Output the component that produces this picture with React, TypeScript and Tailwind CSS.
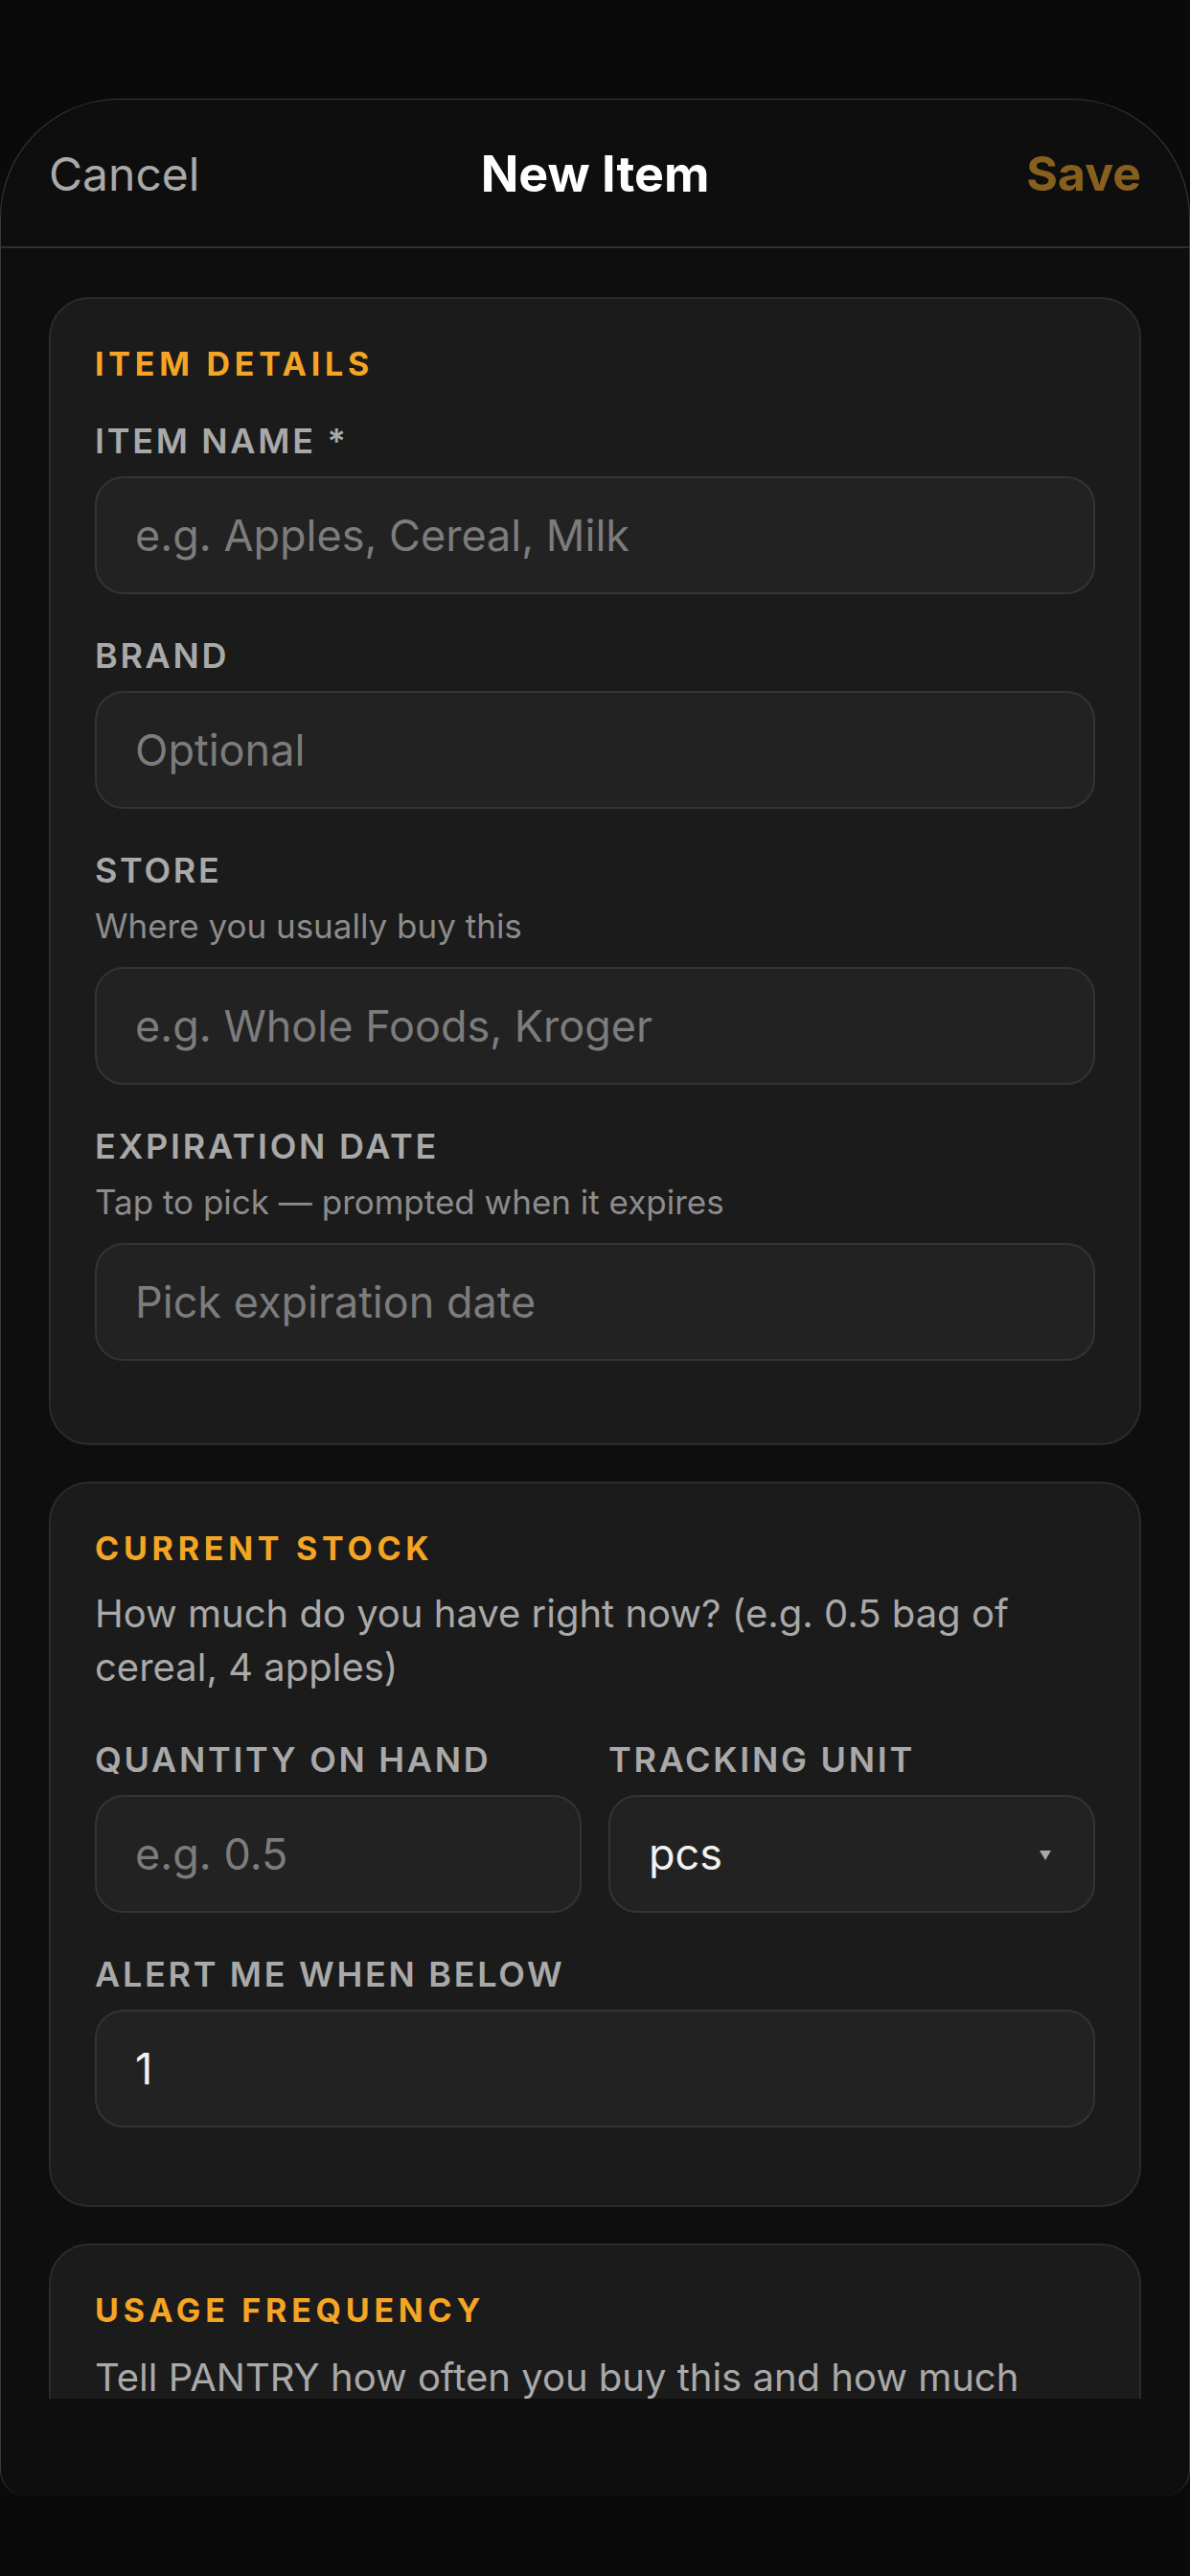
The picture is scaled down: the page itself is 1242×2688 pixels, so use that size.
import React from 'react';

const Label = ({ text, helper }: { text: string; helper?: string }) => (
  <div>
    <div className="text-[36px] leading-[36px] font-semibold tracking-[0.075em] text-[#a9a9a9] mb-[19px]">{text}</div>
    {helper && <div className="text-[35px] leading-[44px] text-[#8c8c8c] -mt-[1px] mb-[21px]">{helper}</div>}
  </div>
);

const TextField = ({ placeholder, value }: { placeholder?: string; value?: string }) => (
  <input
    readOnly
    value={value ?? ''}
    placeholder={placeholder}
    className="w-full h-[123px] rounded-[30px] border-2 border-[#343434] bg-[#222222] pl-[40px] pr-6 text-[45px] text-[#f2f2f2] placeholder:text-[#7c7c7c] outline-none"
  />
);

const SectionTitle = ({ children }: { children: React.ReactNode }) => (
  <div className="text-[34px] leading-[40px] font-bold tracking-[0.14em] text-[#f5a524]">{children}</div>
);

const Card = ({ children, className }: { children: React.ReactNode; className?: string }) => (
  <div className={'rounded-[42px] border-2 border-[#2b2b2b] bg-[#1b1b1b] px-[46px] pt-[48px] ' + (className ?? '')}>
    {children}
  </div>
);

export default function App() {
  return (
    <div className="w-[1242px] h-[2688px] bg-[#0a0a0a] font-[Inter,sans-serif] overflow-hidden">
      <div className="h-[103px]" />
      <div className="h-[2501px] bg-[#0e0e0e] rounded-t-[124px] rounded-b-[26px] border-t border-x border-[#3a3a3a] flex flex-col overflow-hidden">
        {/* nav bar */}
        <div className="h-[153px] shrink-0 grid grid-cols-3 items-center px-[50px] pt-[2px]">
          <span className="text-[48px] text-[#a9a9a9]">Cancel</span>
          <span className="text-[52px] font-bold text-white text-center">New Item</span>
          <span className="text-[50px] font-bold text-[#87601f] text-right">Save</span>
        </div>
        <div className="h-[2px] bg-[#2f2f2f] shrink-0" />

        <div className="h-[2244px] overflow-hidden px-[50px] pt-[51px] flex flex-col gap-[38px]">
          <Card className="pb-[86px]">
            <SectionTitle>ITEM DETAILS</SectionTitle>
            <div className="mt-[42px] flex flex-col gap-[46px]">
              <div>
                <Label text="ITEM NAME *" />
                <TextField placeholder="e.g. Apples, Cereal, Milk" />
              </div>
              <div>
                <Label text="BRAND" />
                <TextField placeholder="Optional" />
              </div>
              <div>
                <Label text="STORE" helper="Where you usually buy this" />
                <TextField placeholder="e.g. Whole Foods, Kroger" />
              </div>
              <div>
                <Label text="EXPIRATION DATE" helper="Tap to pick — prompted when it expires" />
                <TextField placeholder="Pick expiration date" />
              </div>
            </div>
          </Card>

          <Card className="pb-[81px]">
            <SectionTitle>CURRENT STOCK</SectionTitle>
            <p className="mt-[20px] text-[40px] leading-[56px] text-[#a9a9a9]">
              How much do you have right now? (e.g. 0.5 bag of cereal, 4 apples)
            </p>
            <div className="mt-[50px] grid grid-cols-2 gap-[28px]">
              <div>
                <Label text="QUANTITY ON HAND" />
                <TextField placeholder="e.g. 0.5" />
              </div>
              <div>
                <Label text="TRACKING UNIT" />
                <div className="h-[123px] rounded-[30px] border-2 border-[#343434] bg-[#222222] pl-[40px] pr-[44px] flex items-center justify-between">
                  <span className="text-[45px] text-[#f2f2f2]">pcs</span>
                  <svg width="12" height="10" viewBox="0 0 12 10" className="mt-[2px]">
                    <path d="M0 0 H12 L6 10 Z" fill="#a9a9a9" />
                  </svg>
                </div>
              </div>
            </div>
            <div className="mt-[46px]">
              <Label text="ALERT ME WHEN BELOW" />
              <TextField value="1" />
            </div>
          </Card>

          <Card className="pb-[40px]">
            <SectionTitle>USAGE FREQUENCY</SectionTitle>
            <p className="mt-[22px] text-[40px] leading-[56px] text-[#a9a9a9]">
              Tell PANTRY how often you buy this and how much you use each time.
            </p>
          </Card>
        </div>
      </div>
    </div>
  );
}
